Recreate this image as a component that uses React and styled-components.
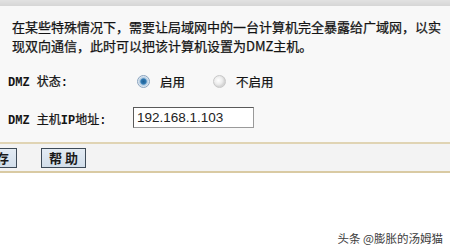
import styled, { createGlobalStyle } from 'styled-components';

const GlobalStyle = createGlobalStyle`
  html, body {
    margin: 0;
    padding: 0;
    background: #ffffff;
  }
  body {
    font-family: "Noto Sans CJK SC", "Liberation Sans", sans-serif;
    color: #141414;
  }
`;

const Page = styled.div`
  position: relative;
  width: 450px;
  height: 250px;
  overflow: hidden;
  background: #ffffff;
`;

const TopStrip = styled.div`
  height: 6px;
  background: linear-gradient(#e2e2e2, #d6d6d6);
`;

const Panel = styled.div`
  background: #f8f8f8;
  padding: 11px 0 11px 0;
`;

const Intro = styled.p`
  margin: 0 0 14px 12px;
  font-size: 13px;
  line-height: 19px;
  white-space: nowrap;
  -webkit-text-stroke: 0.25px #141414;
`;

const Form = styled.div`
  display: grid;
  grid-template-columns: 125px auto;
  row-gap: 14px;
  padding-left: 8px;
  align-items: center;
`;

const Label = styled.div`
  height: 24px;
  line-height: 24px;
  font-size: 12px;
  white-space: nowrap;
  -webkit-text-stroke: 0.25px #141414;
`;

const Latin = styled.span`
  font-family: "Liberation Mono", monospace;
  font-weight: bold;
  font-size: 12px;
  white-space: pre;
  -webkit-text-stroke: 0;
`;

const RadioGroup = styled.div`
  display: flex;
  align-items: center;
  height: 24px;
  padding-left: 4px;
`;

const RadioOption = styled.label`
  display: flex;
  align-items: center;
  gap: 10px;
  margin-right: ${(p) => p.$gap || 0}px;
  font-size: 12.5px;
  -webkit-text-stroke: 0.25px #141414;
`;

const RadioDot = styled.span`
  width: 13px;
  height: 13px;
  border-radius: 50%;
  box-sizing: border-box;
  border: 1px solid ${(p) => (p.$checked ? '#8aa4bf' : '#c8c8c8')};
  background: ${(p) =>
    p.$checked
      ? 'radial-gradient(circle at 50% 50%, #1f5f93 0, #2f79b3 2.6px, #a9c6df 3.6px, #e8eef4 5.5px)'
      : 'radial-gradient(circle at 40% 40%, #ffffff 0, #ececec 4px, #d6d6d6 6px)'};
`;

const IpInput = styled.div`
  width: 121px;
  height: 21px;
  box-sizing: border-box;
  margin-top: -3px;
  border: 1px solid #5a5a5a;
  border-right-color: #9a9a9a;
  border-bottom-color: #9a9a9a;
  background: #ffffff;
  font-family: "Liberation Sans", Arial, sans-serif;
  font-size: 13.5px;
  line-height: 19px;
  padding-left: 3px;
  color: #222;
`;

const ButtonBar = styled.div`
  display: flex;
  align-items: center;
  gap: 24px;
  height: 27px;
  border-top: 2px solid #e0d4b4;
  border-bottom: 2px solid #d9caa3;
  background: #f3f3f3;
`;

const Button = styled.div`
  width: 45px;
  height: 20px;
  box-sizing: border-box;
  margin-left: ${(p) => p.$shift || 0}px;
  border: 1px solid #3d4a57;
  background: linear-gradient(#e3ebf3, #d2deea);
  display: flex;
  align-items: center;
  justify-content: center;
  font-size: 13px;
  font-weight: 700;
  letter-spacing: 3px;
  padding-left: 3px;
  color: #1a1a1a;
`;

const Watermark = styled.div`
  position: absolute;
  right: 7px;
  bottom: 4px;
  font-size: 11.5px;
  color: #3b3b3b;
  text-shadow: 0 0 2px #ffffff;
  white-space: nowrap;
`;

export default function App() {
  return (
    <Page>
      <GlobalStyle />
      <TopStrip />
      <Panel>
        <Intro>
          在某些特殊情况下，需要让局域网中的一台计算机完全暴露给广域网，以实
          <br />
          现双向通信，此时可以把该计算机设置为DMZ主机。
        </Intro>
        <Form>
          <Label>
            <Latin>DMZ </Latin>状态<Latin>:</Latin>
          </Label>
          <RadioGroup>
            <RadioOption $gap={28}>
              <RadioDot $checked />
              启用
            </RadioOption>
            <RadioOption>
              <RadioDot />
              不启用
            </RadioOption>
          </RadioGroup>
          <Label>
            <Latin>DMZ </Latin>主机<Latin>IP</Latin>地址<Latin>:</Latin>
          </Label>
          <IpInput>192.168.1.103</IpInput>
        </Form>
      </Panel>
      <ButtonBar>
        <Button $shift={-28}>保存</Button>
        <Button>帮助</Button>
      </ButtonBar>
      <Watermark>头条 @膨胀的汤姆猫</Watermark>
    </Page>
  );
}
